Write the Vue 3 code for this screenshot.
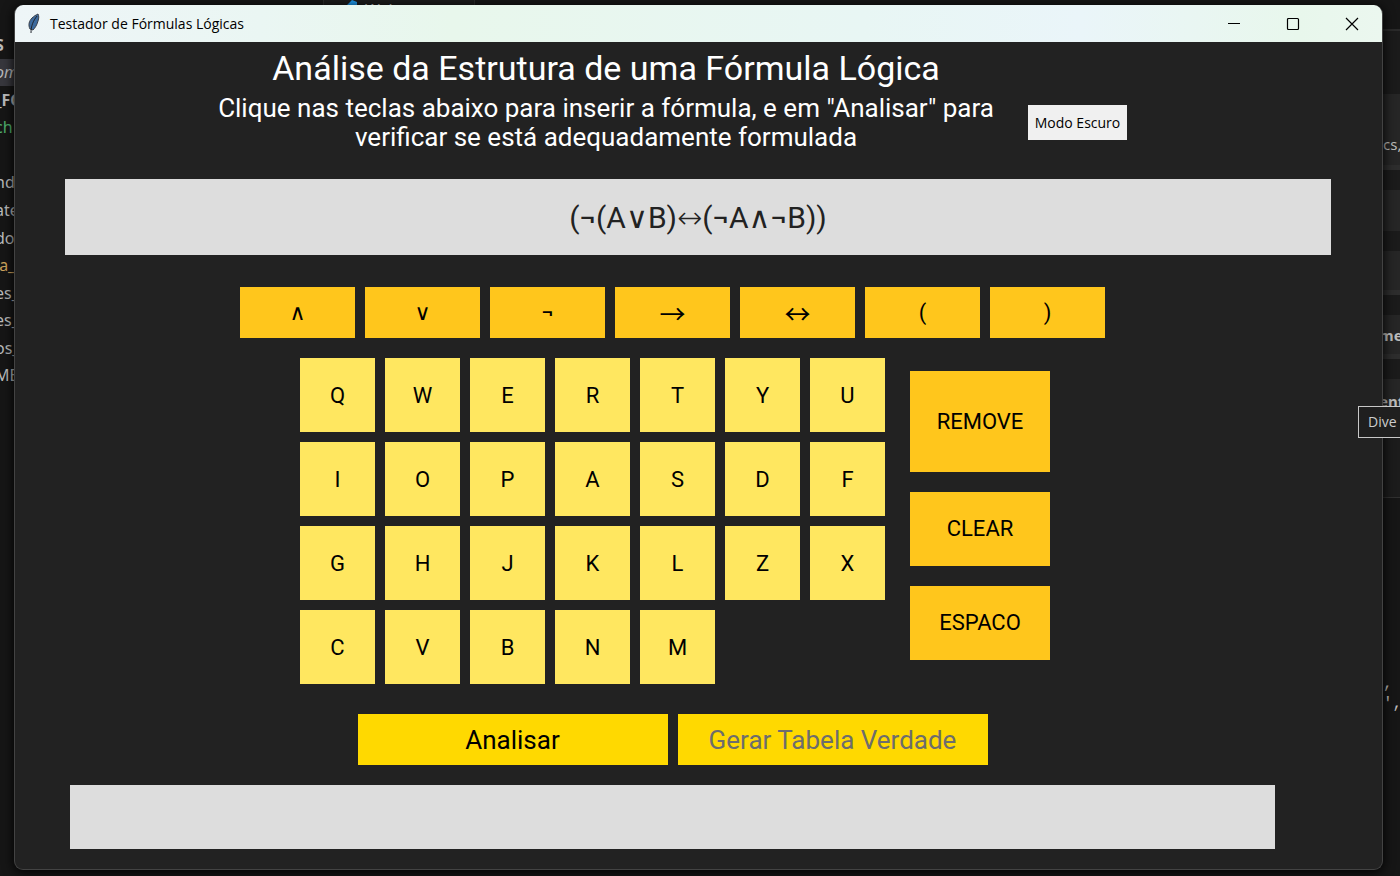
<script setup>
import { ref } from 'vue'

const formula = ref('(¬(A∨B)↔(¬A∧¬B))')
const result = ref('')
const operators = ['∧', '∨', '¬', '→', '↔', '(', ')']
const letters = 'QWERTYUIOPASDFGHJKLZXCVBNM'.split('')

const files = [
  { text: 'S', kind: 'strong' },
  { text: 'om', kind: 'active' },
  { text: '_FO', kind: 'strong' },
  { text: 'ch', kind: 'added' },
  { text: '', kind: '' },
  { text: 'ndo', kind: '' },
  { text: 'ate', kind: '' },
  { text: 'dor', kind: '' },
  { text: 'la_', kind: 'changed' },
  { text: 'es_', kind: '' },
  { text: 'es_', kind: '' },
  { text: 'os_', kind: '' },
  { text: 'ME', kind: '' }
]

function insert(symbol) {
  formula.value += symbol
}
function removeLast() {
  formula.value = formula.value.slice(0, -1)
}
function clearAll() {
  formula.value = ''
}
</script>

<template>
  <div class="desktop">
    <div class="editor">
      <div class="tab">
        <svg class="tab-icon" viewBox="0 0 20 20" aria-hidden="true">
          <path d="M14 0l5 2v16l-5 2L5 11l-4 3-1-1 4-3-4-3 1-1 4 3z" fill="#1f9cf0" />
        </svg>
        <span>Welcome</span>
        <span class="tab-close">×</span>
      </div>
      <div class="files">
        <div v-for="(file, i) in files" :key="i" class="file" :class="file.kind">{{ file.text }}</div>
      </div>
      <div class="side">
        <div class="side-head"></div>
        <div class="side-gap tall"></div>
        <div class="card large lined">cs,</div>
        <div class="side-gap"></div>
        <div class="card"></div>
        <div class="side-gap"></div>
        <div class="card lined"></div>
        <div class="side-gap"></div>
        <div class="card lined bold">me</div>
        <div class="side-gap"></div>
        <div class="card bold last">ent</div>
        <div class="code">,<br />',</div>
      </div>
    </div>

    <div class="window">
      <header class="titlebar">
        <svg class="feather" viewBox="0 0 14 22" aria-hidden="true">
          <path d="M11 1c1 2 1 4 0 7-1 4-3 7-5 9l-3-1C1 12 2 8 5 5c2-2 4-3 6-4z" fill="#3d6b9e" stroke="#3a3f48" stroke-width="1" />
          <path d="M10 3C6 8 4 13 4 20" fill="none" stroke="#20242c" stroke-width="1" />
        </svg>
        <span class="caption">Testador de Fórmulas Lógicas</span>
        <div class="controls">
          <button type="button" class="control" aria-label="Minimizar">
            <svg viewBox="0 0 14 14"><path d="M1 6.5h12" /></svg>
          </button>
          <button type="button" class="control" aria-label="Maximizar">
            <svg viewBox="0 0 14 14"><rect x="1.5" y="1.5" width="11" height="11" rx="1" /></svg>
          </button>
          <button type="button" class="control" aria-label="Fechar">
            <svg viewBox="0 0 14 14"><path d="M1 1l12 12M13 1L1 13" /></svg>
          </button>
        </div>
      </header>

      <main class="body">
        <section class="intro">
          <div class="texts">
            <h1>Análise da Estrutura de uma Fórmula Lógica</h1>
            <p>Clique nas teclas abaixo para inserir a fórmula, e em "Analisar" para<br />verificar se está adequadamente formulada</p>
          </div>
          <button type="button" class="mode">Modo Escuro</button>
        </section>

        <input v-model="formula" class="formula" type="text" aria-label="Fórmula" readonly />

        <div class="board">
          <div class="operators">
            <button
              v-for="op in operators"
              :key="op"
              type="button"
              class="key op"
              :class="{ arrow: op === '→' || op === '↔' }"
              @click="insert(op)"
            >{{ op }}</button>
          </div>
          <div class="keyboard">
            <div class="letters">
              <button v-for="l in letters" :key="l" type="button" class="key letter" @click="insert(l)">{{ l }}</button>
            </div>
            <div class="edits">
              <button type="button" class="key edit big" @click="removeLast">REMOVE</button>
              <button type="button" class="key edit" @click="clearAll">CLEAR</button>
              <button type="button" class="key edit" @click="insert(' ')">ESPACO</button>
            </div>
          </div>
          <div class="actions">
            <button type="button" class="action">Analisar</button>
            <button type="button" class="action" disabled>Gerar Tabela Verdade</button>
          </div>
          <input v-model="result" class="result" type="text" aria-label="Resultado" readonly />
        </div>
      </main>
    </div>

    <div class="tip">Dive</div>
  </div>
</template>

<style>
body {
  background: #161616;
}
</style>

<style scoped>
* {
  box-sizing: border-box;
}
.desktop {
  position: relative;
  display: flex;
  min-height: 100vh;
  padding: 5px 17px 6px 14px;
  overflow: hidden;
  background: #161616;
  font-family: Roboto, "DejaVu Sans Light", "DejaVu Sans", sans-serif;
}
button,
input {
  margin: 0;
  padding: 0;
  border: 0;
  border-radius: 0;
  font-family: inherit;
}

.editor {
  position: absolute;
  inset: 0;
  color: #bcbcbc;
  font: 16px/20px "Noto Sans", sans-serif;
}
.tab {
  position: absolute;
  top: 0;
  left: 323px;
  display: flex;
  align-items: flex-start;
  width: 152px;
  height: 20px;
  padding-left: 14px;
  border: solid #2b2b2b;
  border-width: 0 1px;
  background: #1c1c1c;
}
.tab-icon {
  width: 20px;
  height: 20px;
  margin-right: 7px;
}
.tab-close {
  margin-left: 12px;
}
.files {
  position: absolute;
  top: 31px;
  left: -5px;
  display: grid;
  grid-auto-rows: 1fr;
  align-items: stretch;
  width: 30px;
  height: 358px;
}
.file {
  display: flex;
  align-items: center;
  white-space: nowrap;
}
.strong,
.bold {
  font-weight: 700;
}
.active {
  background: #37373d;
  font-style: italic;
}
.added {
  color: #4fb06d;
}
.changed {
  color: #d0a45c;
}
.side {
  position: absolute;
  top: 0;
  right: 0;
  width: 17px;
  font-size: 15px;
}
.side-head {
  height: 31px;
  border-bottom: 2px solid #2a2a2a;
}
.side-gap {
  height: 20px;
  background: #1b1b1b;
}
.side-gap.tall {
  height: 63px;
}
.card {
  display: flex;
  align-items: center;
  height: 41px;
  background: #262626;
}
.card.lined {
  height: 44px;
  border-bottom: 5px solid #2d2d2d;
}
.card.large {
  height: 76px;
  padding-top: 28px;
}
.card.bold {
  margin-left: -4px;
}
.card.last {
  align-items: flex-start;
  height: 119px;
  padding-top: 12px;
  border-bottom: 1px solid #303030;
  background: linear-gradient(#262626 28px, #1c1c1c 28px);
}
.code {
  padding-top: 176px;
  font: 16px/20px "Liberation Mono", monospace;
}

.window {
  position: relative;
  display: flex;
  flex: 1;
  flex-direction: column;
  min-width: 0;
  overflow: hidden;
  border: 1px solid #434343;
  border-top: 0;
  border-radius: 9px;
  background: #222;
  box-shadow: 0 2px 12px #000;
}
.titlebar {
  display: flex;
  align-items: center;
  height: 37px;
  padding-left: 12px;
  background: linear-gradient(90deg, #eef5f7, #eaf6f3 18%, #e8f7ec 32%, #e8f6f4 62%, #eaf5f9 78%, #e8f7ec 94%, #ebf7ef);
}
.feather {
  width: 14px;
  height: 22px;
}
.caption {
  margin-left: 9px;
  color: #000;
  font: 14px/20px "Open Sans", sans-serif;
}
.controls {
  display: flex;
  margin-left: auto;
  padding-right: 1px;
}
.control {
  display: grid;
  place-items: center;
  width: 59px;
  height: 36px;
  background: none;
}
.control svg {
  width: 14px;
  height: 14px;
  fill: none;
  stroke: #000;
  stroke-width: 1.2;
}

.body {
  display: flex;
  flex-direction: column;
}
.intro {
  display: flex;
  align-items: flex-end;
  justify-content: center;
  gap: 34px;
  margin-right: 52px;
  padding-top: 7px;
}
.texts {
  width: 776px;
  color: #fff;
  text-align: center;
}
h1 {
  margin: 0;
  font-size: 34px;
  font-weight: 400;
  line-height: 38px;
}
p {
  margin: 7px 0 0;
  font-size: 26px;
  line-height: 29px;
  white-space: nowrap;
}
.mode {
  width: 99px;
  height: 35px;
  margin-bottom: 12px;
  background: #f0f0f0;
  color: #000;
  font: 14px/20px "Open Sans", sans-serif;
}
.formula {
  height: 76px;
  margin: 27px 51px 0 50px;
  background: #ddd;
  color: #222;
  font-size: 30px;
  text-align: center;
}
.board {
  display: flex;
  flex-direction: column;
  align-items: center;
  margin: 32px 107px 20px 55px;
}
.operators,
.actions {
  display: flex;
  gap: 10px;
}
.key {
  background: #ffc61c;
  color: #000;
  font-size: 22px;
}
.op {
  width: 115px;
  height: 51px;
}
.op.arrow {
  font-family: "Noto Sans CJK JP", sans-serif;
  font-size: 26px;
  line-height: 30px;
}
.keyboard {
  display: flex;
  align-items: center;
  gap: 25px;
  margin: 20px 0 30px 5px;
}
.letters {
  display: grid;
  grid-template-columns: repeat(7, 75px);
  grid-auto-rows: 74px;
  gap: 10px;
}
.letter {
  background: #ffe760;
}
.edits {
  display: flex;
  flex-direction: column;
  gap: 20px;
  margin-bottom: 12px;
}
.edit {
  width: 140px;
  height: 74px;
}
.big {
  height: 101px;
}
.action {
  width: 310px;
  height: 51px;
  background: #ffd900;
  color: #000;
  font-size: 26px;
}
.action:disabled {
  color: #6d6d6d;
}
.result {
  width: 100%;
  height: 64px;
  margin-top: 20px;
  background: #ddd;
}
.tip {
  position: absolute;
  top: 406px;
  right: 0;
  width: 42px;
  height: 32px;
  padding-left: 9px;
  border: 1px solid #c8c8c8;
  border-right: 0;
  background: #1f1f1f;
  color: #ccc;
  font: 14px/30px "Open Sans", sans-serif;
}
</style>
